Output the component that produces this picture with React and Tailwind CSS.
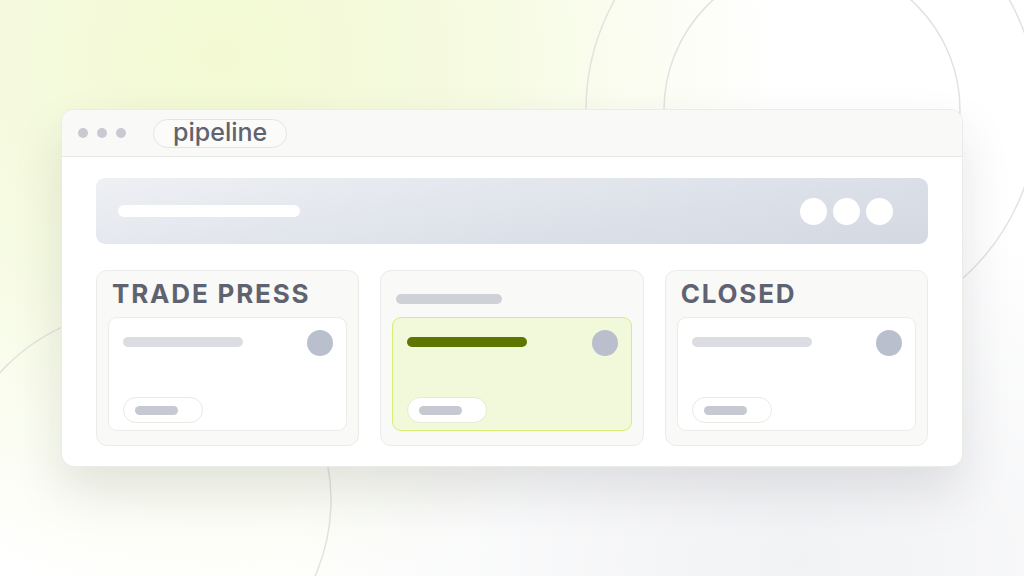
import React from "react";

function Card({ active }) {
  return (
    <div
      className={
        "h-[114px] rounded-[9px] px-[14px] pt-[18px] pb-[7px] flex flex-col justify-between " +
        (active ? "bg-[#f2f8da] border-[1.5px] border-[#d7ee74]" : "bg-white border border-[#ebebe7]")
      }
    >
      <div className="flex items-start justify-between">
        <div className={"mt-[1px] h-[10px] w-[120px] rounded-full " + (active ? "bg-[#5e7500]" : "bg-[#dcdde2]")} />
        <div className="h-[26px] w-[26px] rounded-full bg-[#b9bfcc] -mt-[6px] -mr-[1px]" />
      </div>
      <div
        className={
          "h-[26px] w-[80px] rounded-full border flex items-center px-[11px] " +
          (active ? "bg-white border-[#e6ecd0]" : "bg-white border-[#e8e8e4]")
        }
      >
        <div className="h-[9px] w-[43px] rounded-full bg-[#c6c9d1]" />
      </div>
    </div>
  );
}

function Column({ title, active }) {
  return (
    <div className="flex-1 rounded-[11px] border border-[#ebebe7] bg-[#f9f9f7] px-[11px] pb-[14px]">
      <div className="h-[46px] flex items-center px-[4px]">
        {title ? (
          <span className="text-[26px] leading-none font-bold tracking-[0.07em] text-[#5f6370] -mt-[1px]">{title}</span>
        ) : (
          <div className="h-[10px] w-[106px] rounded-full bg-[#cfd1d8] mt-[9px]" />
        )}
      </div>
      <Card active={active} />
    </div>
  );
}

export default function App() {
  return (
    <div
      className="relative w-[1024px] h-[576px] overflow-hidden bg-white"
      style={{ fontFamily: "Inter, 'Noto Sans', sans-serif" }}
    >
      <div className="absolute inset-0 bg-[radial-gradient(circle_at_220px_55px,#f2f9d2_0%,#f6fbe2_28%,rgba(255,255,255,0)_58%)]" />
      <div className="absolute inset-0 bg-[radial-gradient(ellipse_at_800px_560px,#f1f2f4_0%,rgba(255,255,255,0)_45%)]" />
      <svg className="absolute inset-0" width="1024" height="576" fill="none">
        <circle cx="812" cy="110" r="226" stroke="#e2e2df" strokeWidth="1.5" />
        <circle cx="812" cy="110" r="148" stroke="#e2e2df" strokeWidth="1.5" />
        <circle cx="141" cy="500" r="190" stroke="#e2e2df" strokeWidth="1.5" />
      </svg>

      <div className="relative pt-[109px] pl-[61px]">
        <div className="w-[902px] h-[358px] rounded-[13px] border border-[#ebebe7] bg-white overflow-hidden shadow-[0_24px_50px_rgba(40,45,60,0.12)] flex flex-col">
          <div className="h-[47px] bg-[#f9f9f7] border-b border-[#e8e8e4] flex items-center pl-[16px] gap-[9px]">
            <span className="h-[10px] w-[10px] rounded-full bg-[#c9cad1]" />
            <span className="h-[10px] w-[10px] rounded-full bg-[#c9cad1]" />
            <span className="h-[10px] w-[10px] rounded-full bg-[#c9cad1]" />
            <div className="ml-[18px] h-[29px] px-[19px] rounded-full border border-[#e4e4e0] bg-[#fbfbf9] flex items-center">
              <span className="text-[25px] leading-none font-medium text-[#5f6370] -mt-[2px]">pipeline</span>
            </div>
          </div>
          <div className="flex-1 px-[34px] pt-[21px] flex flex-col">
            <div className="h-[66px] rounded-[9px] bg-[linear-gradient(170deg,#eef0f4_0%,#dde1e9_60%,#d3d8e2_100%)] flex items-center justify-between pl-[22px] pr-[35px]">
              <div className="h-[12px] w-[182px] rounded-full bg-white" />
              <div className="flex gap-[6px]">
                <span className="h-[27px] w-[27px] rounded-full bg-white" />
                <span className="h-[27px] w-[27px] rounded-full bg-white" />
                <span className="h-[27px] w-[27px] rounded-full bg-white" />
              </div>
            </div>
            <div className="mt-[26px] flex gap-[21px]">
              <Column title="TRADE PRESS" />
              <Column active />
              <Column title="CLOSED" />
            </div>
          </div>
        </div>
      </div>
    </div>
  );
}
